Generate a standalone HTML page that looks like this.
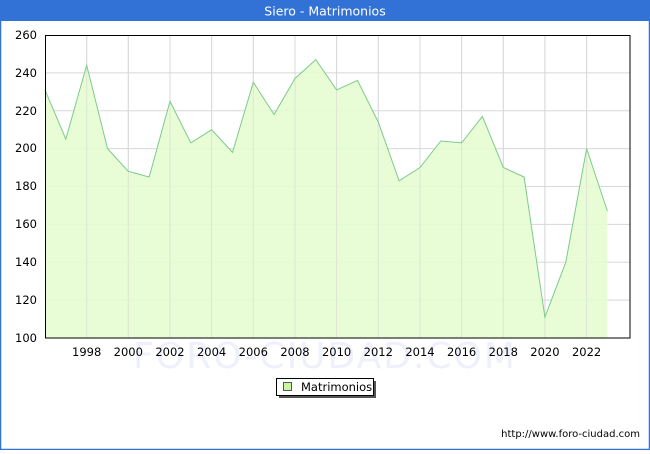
<!DOCTYPE html><html><head><style>body{margin:0;width:650px;height:450px;overflow:hidden;font-family:"DejaVu Sans","Liberation Sans",sans-serif}</style></head><body>
<svg width="650" height="450" xmlns="http://www.w3.org/2000/svg" font-family="DejaVu Sans, Liberation Sans, sans-serif">
<rect x="0" y="0" width="650" height="450" fill="#fff"/>
<rect x="0.5" y="0.5" width="649" height="449" fill="none" stroke="#3272d6" stroke-width="1.5"/>
<rect x="0" y="0" width="650" height="21" fill="#3272d6"/>
<text x="325" y="15.5" fill="#fff" font-size="12.5" text-anchor="middle">Siero - Matrimonios</text>
<text x="325" y="368" fill="#eef0fb" font-size="36" text-anchor="middle" letter-spacing="2">FORO-CIUDAD.COM</text>
<g stroke="#d8d8d8" stroke-width="1">
<path d="M45 300.1H630M45 262.2H630M45 224.4H630M45 186.5H630M45 148.6H630M45 110.7H630M45 72.9H630"/>
<path d="M86.7 35V338M128.3 35V338M170 35V338M211.6 35V338M253.3 35V338M295 35V338M336.6 35V338M378.3 35V338M420 35V338M461.6 35V338M503.3 35V338M544.9 35V338M586.6 35V338"/>
</g>
<path d="M45 338L45 89.9L65.8 139.1L86.7 65.3L107.5 148.6L128.3 171.3L149.2 177L170 101.3L190.8 142.9L211.6 129.7L232.5 152.4L253.3 82.3L274.1 114.5L295 78.5L315.8 59.6L336.6 89.9L357.5 80.4L378.3 122.1L399.1 180.8L420 167.5L440.8 141L461.6 142.9L482.4 116.4L503.3 167.5L524.1 177L544.9 317.2L565.8 262.2L586.6 148.6L607.4 211.1L607.4 338Z" fill="#e5fdd0" fill-opacity="0.9"/>
<g stroke="#d8d8d8" stroke-width="1" opacity="0.6">
<path d="M86.7 35V338M128.3 35V338M170 35V338M211.6 35V338M253.3 35V338M295 35V338M336.6 35V338M378.3 35V338M420 35V338M461.6 35V338M503.3 35V338M544.9 35V338M586.6 35V338"/>
</g>
<path d="M45 89.9L65.8 139.1L86.7 65.3L107.5 148.6L128.3 171.3L149.2 177L170 101.3L190.8 142.9L211.6 129.7L232.5 152.4L253.3 82.3L274.1 114.5L295 78.5L315.8 59.6L336.6 89.9L357.5 80.4L378.3 122.1L399.1 180.8L420 167.5L440.8 141L461.6 142.9L482.4 116.4L503.3 167.5L524.1 177L544.9 317.2L565.8 262.2L586.6 148.6L607.4 211.1" fill="none" stroke="#7ccb8c" stroke-width="1"/>
<rect x="45.5" y="35.5" width="584.5" height="302.5" fill="none" stroke="#000" stroke-width="1"/>
<g font-size="11.5" fill="#000" text-anchor="end">
<text x="37" y="342">100</text><text x="37" y="304">120</text><text x="37" y="266">140</text><text x="37" y="228">160</text><text x="37" y="190">180</text><text x="37" y="152">200</text><text x="37" y="115">220</text><text x="37" y="77">240</text><text x="37" y="39">260</text>
</g>
<g font-size="11.5" fill="#000" text-anchor="middle">
<text x="86.7" y="356">1998</text><text x="128.3" y="356">2000</text><text x="170" y="356">2002</text><text x="211.6" y="356">2004</text><text x="253.3" y="356">2006</text><text x="295" y="356">2008</text><text x="336.6" y="356">2010</text><text x="378.3" y="356">2012</text><text x="420" y="356">2014</text><text x="461.6" y="356">2016</text><text x="503.3" y="356">2018</text><text x="544.9" y="356">2020</text><text x="586.6" y="356">2022</text>
</g>
<rect x="279" y="381" width="97" height="17" fill="#555"/>
<rect x="276.5" y="378.5" width="97" height="17" fill="#fff" stroke="#000"/>
<rect x="283.5" y="382.5" width="8" height="8" fill="#c8f5a0" stroke="#555"/>
<text x="301" y="391" font-size="11.5">Matrimonios</text>
<text x="640" y="437" font-size="10" text-anchor="end">http://www.foro-ciudad.com</text>
</svg>
</body></html>
